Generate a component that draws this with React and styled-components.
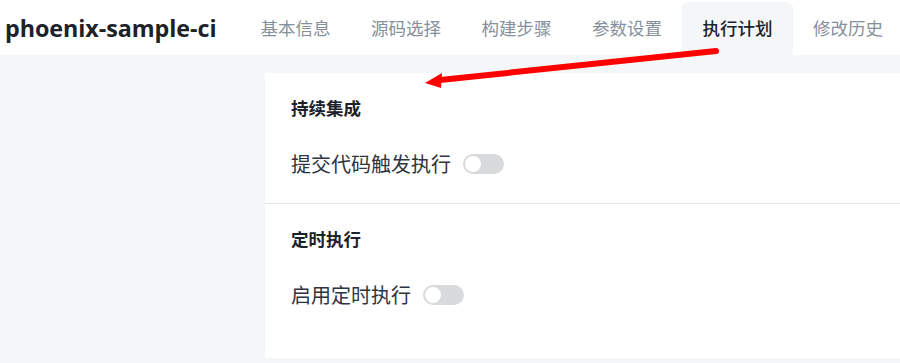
import * as React from "react";
import styled, { createGlobalStyle } from "styled-components";

const GlobalStyle = createGlobalStyle`
  html, body {
    margin: 0;
    padding: 0;
    background: #f5f6f8;
    font-family: "Noto Sans CJK SC", "Open Sans", sans-serif;
  }
`;

const Page = styled.div`
  position: relative;
  width: 900px;
  height: 363px;
  overflow: hidden;
  background: #f5f6f8;
`;

const Header = styled.header`
  display: flex;
  align-items: flex-end;
  height: 55px;
  background: #fff;
`;

const Title = styled.h1`
  flex: 0 0 240px;
  height: 100%;
  box-sizing: border-box;
  margin: 0;
  padding-left: 5px;
  display: flex;
  align-items: center;
  font-family: "Open Sans", sans-serif;
  font-size: 23.3px;
  font-weight: 700;
  letter-spacing: -0.05px;
  color: #1d2129;
  white-space: nowrap;
`;

const Tabs = styled.nav`
  display: flex;
  height: 53px;
  flex-shrink: 0;
`;

const Tab = styled.div`
  display: flex;
  align-items: center;
  flex-shrink: 0;
  white-space: nowrap;
  padding: 0 20px 2px 20.5px;
  font-size: 17.5px;
  color: ${(p) => (p.$active ? "#1d2129" : "#86909c")};
  font-weight: ${(p) => (p.$active ? 500 : 400)};
  background: ${(p) => (p.$active ? "#f5f6f8" : "transparent")};
  border-radius: 6px 6px 0 0;
`;

const Body = styled.main`
  display: flex;
  padding: 18px 0 0 265px;
`;

const Card = styled.section`
  flex: 1;
  height: 285px;
  background: #fff;
  display: flex;
  flex-direction: column;
`;

const Group = styled.div`
  padding: 23px 25px 25px 26px;
  border-bottom: ${(p) => (p.$divider ? "1px solid #e5e6eb" : "none")};
  display: flex;
  flex-direction: column;
  gap: 28px;
`;

const GroupTitle = styled.h2`
  margin: 0;
  font-size: 17.5px;
  line-height: 24px;
  font-weight: 700;
  color: #1d2129;
`;

const Row = styled.label`
  display: flex;
  align-items: center;
  gap: 12px;
  height: 30px;
  font-size: 20px;
  color: #2e3440;
`;

const Switch = styled.span`
  position: relative;
  width: 41px;
  height: 20px;
  margin-top: 1px;
  border-radius: 10px;
  background: #d9dadc;
  &::after {
    content: "";
    position: absolute;
    left: 2px;
    top: 2px;
    width: 16px;
    height: 16px;
    border-radius: 50%;
    background: #fff;
  }
`;

const Overlay = styled.svg`
  position: absolute;
  left: 0;
  top: 0;
  pointer-events: none;
`;

const tabs = ["基本信息", "源码选择", "构建步骤", "参数设置", "执行计划", "修改历史"];

const App = () => {
  return (
    <Page>
      <GlobalStyle />
      <Header>
        <Title>phoenix-sample-ci</Title>
        <Tabs>
          {tabs.map((t) => (
            <Tab key={t} $active={t === "执行计划"}>
              {t}
            </Tab>
          ))}
        </Tabs>
      </Header>
      <Body>
        <Card>
          <Group $divider>
            <GroupTitle>持续集成</GroupTitle>
            <Row>
              提交代码触发执行
              <Switch />
            </Row>
          </Group>
          <Group>
            <GroupTitle>定时执行</GroupTitle>
            <Row>
              启用定时执行
              <Switch />
            </Row>
          </Group>
        </Card>
      </Body>
      <Overlay width="900" height="363">
        <line x1="716" y1="51" x2="440" y2="80" stroke="#ff0000" strokeWidth="6" strokeLinecap="round" />
        <polygon points="425,83 442,73 441,88" fill="#ff0000" />
      </Overlay>
    </Page>
  );
};

export default App;
